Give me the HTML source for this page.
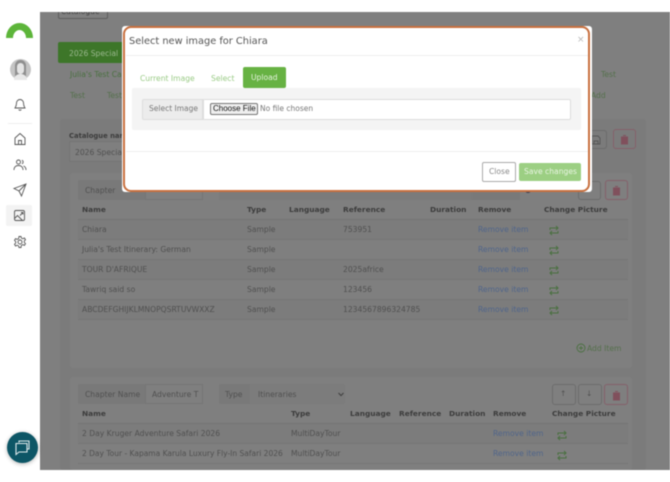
<!DOCTYPE html>
<html><head><meta charset="utf-8">
<style>
html,body{margin:0;padding:0;background:#fff;}
#p{position:relative;width:670px;height:482px;overflow:hidden;background:#fff;font-family:"DejaVu Sans","Liberation Sans",sans-serif;filter:blur(.45px);}
#p div,#p svg{position:absolute;}
.t{position:absolute;white-space:nowrap;font-size:7.6px;line-height:10px;color:#505050;margin-top:1px;}
.h{font-weight:bold;color:#3c3c3c;font-size:7.4px;}
.b{color:#50658a;}
.g{color:#4a7040;}
.l{height:1px;background:#737373;}
.btn{border:1px solid #6c6c6c;border-radius:3px;box-sizing:border-box;}
.red{border-color:#85606a;}
</style></head><body>
<div id="p">
<!-- sidebar -->
<svg style="left:0;top:20px" width="40" height="20" viewBox="0 0 40 20"><path d="M6 18 A13.500 15 0 0 1 33 18 L26 18 A6.500 8 0 0 0 13 18 Z" fill="#5db53a"/></svg>
<div style="left:10px;top:59px;width:21px;height:21px;border-radius:50%;background:#c4c4c4"></div>
<div style="left:15px;top:60px;width:11px;height:18px;border-radius:6px 6px 3px 3px;background:#8f8f8f"></div>
<div style="left:17px;top:63px;width:7px;height:11px;border-radius:4px;background:#e4e4e4"></div>
<div style="left:14px;top:74px;width:13px;height:6px;border-radius:6px 6px 0 0;background:#e8e8e8"></div>
<svg style="left:13px;top:98px" width="14" height="14" viewBox="0 0 14 14" fill="none" stroke="#555" stroke-width=".9"><path d="M7 1.500a3.500 3.500 0 0 1 3.500 3.500c0 3 1 4 1.500 5H2c.5-1 1.500-2 1.500-5A3.500 3.500 0 0 1 7 1.500zM5.700 11.500a1.500 1.500 0 0 0 2.600 0"/></svg>
<div class="l" style="left:8px;top:123px;width:24px;background:#eee"></div>
<svg style="left:13px;top:132px" width="14" height="14" viewBox="0 0 14 14" fill="none" stroke="#555" stroke-width=".9"><path d="M2 6l5-4.500L12 6v6.500H2zM5.500 12.500V8.500h3v4"/></svg>
<svg style="left:13px;top:158px" width="14" height="14" viewBox="0 0 14 14" fill="none" stroke="#555" stroke-width=".9"><circle cx="5.500" cy="4" r="2"/><path d="M1 12c0-3 2-4.500 4.500-4.500S10 9 10 12M9 2.200a2 2 0 0 1 0 3.600M10.500 8c1.500.5 2.500 2 2.500 4"/></svg>
<svg style="left:13px;top:183px" width="14" height="14" viewBox="0 0 14 14" fill="none" stroke="#555" stroke-width=".9"><path d="M13 1L1 5.500l5 2.500 2.500 5zM6 8l7-7"/></svg>
<div style="left:6px;top:205px;width:26px;height:21px;background:#f3f3f3;border-radius:2px"></div>
<svg style="left:13px;top:209px" width="13" height="13" viewBox="0 0 13 13" fill="none" stroke="#555" stroke-width=".9"><rect x="1.500" y="1.500" width="10" height="10" rx="1.500"/><path d="M1.500 9.500l3-3 5 5M8 3.500h2v2M10 3.500L7 6.500"/></svg>
<svg style="left:13px;top:235px" width="14" height="14" viewBox="0 0 14 14" fill="none" stroke="#555" stroke-width=".9"><circle cx="7" cy="7" r="2"/><path d="M6 1.500h2l.4 1.600 1.500.7 1.500-.8 1.100 1.700-1.200 1.200v1.600l1.200 1.200-1.100 1.700-1.500-.8-1.500.7L8 12.500H6l-.4-1.600-1.500-.7-1.500.8-1.100-1.700 1.200-1.200V6.500L1.500 5.300l1.100-1.700 1.500.8 1.500-.7z"/></svg>

<!-- dim backdrop -->
<div style="left:40px;top:12px;width:630px;height:458px;background:#7f7f7f"></div>
<div style="left:58px;top:12px;width:50px;height:7px;border:1px solid #5f5f5f;border-top:0;border-radius:0 0 2px 2px;box-sizing:border-box"></div>
<div style="left:40px;top:0;width:630px;height:22px;overflow:hidden"><span class="t" style="left:21px;top:6px;color:#3f3f3f;clip-path:inset(5px 0 0 0)">Catalogue</span></div>
<div style="left:58px;top:42px;width:72px;height:21px;background:#3d7629;border-radius:2px"></div>
<span class="t" style="left:69px;top:48px;color:#9bb88f">2026 Special</span>
<span class="t g" style="left:70px;top:69px">Julia's Test Ca</span>
<span class="t g" style="left:70px;top:90px;color:#55704c">Test</span>
<span class="t g" style="left:107px;top:90px;color:#55704c">Test</span>
<span class="t g" style="left:601px;top:69px;color:#55704c">Test</span>
<span class="t g" style="left:591px;top:90px;color:#55704c">Add</span>

<!-- outer panel -->
<div style="left:60px;top:119px;width:586px;height:351px;background:#7b7b7b;border-radius:3px"></div>
<span class="t h" style="left:69px;top:130px;font-size:6.800px">Catalogue name</span>
<div style="left:69px;top:141px;width:60px;height:21px;background:#7f7f7f;border:1px solid #747474;box-sizing:border-box;border-radius:2px"></div>
<span class="t" style="left:75px;top:147px">2026 Special</span>
<div class="btn" style="left:584px;top:130px;width:23px;height:19px"></div>
<svg style="left:591px;top:135px" width="10" height="10" viewBox="0 0 10 10" fill="none" stroke="#555" stroke-width=".9"><path d="M1 1h6l2 2v6H1zM3 9V6h4v3"/></svg>
<div class="btn red" style="left:613px;top:129px;width:23px;height:20px"></div>
<svg style="left:620px;top:134px" width="9" height="11" viewBox="0 0 9 11" fill="#80505c"><path d="M1 2.500h7V10.500H1zM3 1h3v1H3z"/></svg>

<!-- chapter 1 -->
<div style="left:70px;top:173px;width:562px;height:195px;background:#7f7f7f;border-radius:3px"></div>
<div style="left:78px;top:180px;width:67px;height:20px;background:#797979;border-radius:2px 0 0 2px"></div>
<span class="t" style="left:85px;top:185px">Chapter</span>
<div style="left:145px;top:180px;width:58px;height:20px;border:1px solid #757575;box-sizing:border-box"></div>
<div style="left:219px;top:185px;width:253px;height:15px;background:#7b7b7b"></div>
<div style="left:472px;top:185px;width:48px;height:15px;background:#797979"></div>
<div style="left:525px;top:187px;width:6px;height:6px;border-radius:50%;background:#2c3552"></div>
<div class="btn" style="left:578px;top:181px;width:23px;height:19px"></div>
<div class="btn red" style="left:605px;top:180px;width:23px;height:20px"></div>
<svg style="left:612px;top:185px" width="9" height="11" viewBox="0 0 9 11" fill="#80505c"><path d="M1 2.500h7V10.500H1zM3 1h3v1H3z"/></svg>

<span class="t h" style="left:82px;top:204px">Name</span>
<span class="t h" style="left:247px;top:204px">Type</span>
<span class="t h" style="left:289px;top:204px">Language</span>
<span class="t h" style="left:343px;top:204px">Reference</span>
<span class="t h" style="left:430px;top:204px">Duration</span>
<span class="t h" style="left:478px;top:204px">Remove</span>
<span class="t h" style="left:544px;top:204px">Change Picture</span>
<div class="l" style="left:78px;top:219px;width:550px"></div>
<div style="left:78px;top:220px;width:550px;height:19px;background:#7c7c7c"></div>
<div class="l" style="left:78px;top:239px;width:550px;background:#767676"></div>
<div style="left:78px;top:260px;width:550px;height:19px;background:#7c7c7c"></div>
<div class="l" style="left:78px;top:259px;width:550px;background:#767676"></div>
<div class="l" style="left:78px;top:279px;width:550px;background:#767676"></div>
<div style="left:78px;top:300px;width:550px;height:19px;background:#7c7c7c"></div>
<div class="l" style="left:78px;top:299px;width:550px;background:#767676"></div>
<div class="l" style="left:78px;top:319px;width:550px;background:#767676"></div>

<span class="t" style="left:82px;top:224px">Chiara</span>
<span class="t" style="left:82px;top:244px">Julia's Test Itinerary: German</span>
<span class="t" style="left:82px;top:264px">TOUR D'AFRIQUE</span>
<span class="t" style="left:82px;top:284px">Tawriq said so</span>
<span class="t" style="left:82px;top:304px">ABCDEFGHIJKLMNOPQSRTUVWXXZ</span>
<span class="t" style="left:247px;top:224px">Sample</span>
<span class="t" style="left:247px;top:244px">Sample</span>
<span class="t" style="left:247px;top:264px">Sample</span>
<span class="t" style="left:247px;top:284px">Sample</span>
<span class="t" style="left:247px;top:304px">Sample</span>
<span class="t" style="left:343px;top:224px">753951</span>
<span class="t" style="left:343px;top:264px">2025africe</span>
<span class="t" style="left:343px;top:284px">123456</span>
<span class="t" style="left:343px;top:304px">1234567896324785</span>
<span class="t b" style="left:478px;top:224px">Remove item</span>
<span class="t b" style="left:478px;top:244px">Remove item</span>
<span class="t b" style="left:478px;top:264px">Remove item</span>
<span class="t b" style="left:478px;top:284px">Remove item</span>
<span class="t b" style="left:478px;top:304px">Remove item</span>
<svg style="left:549px;top:225px" width="10" height="11" viewBox="0 0 10 11" fill="none" stroke="#4a7040"><path d="M1 5V3h8M7 1l2 2-2 2M9 6v2H1M3 6L1 8l2 2"/></svg>
<svg style="left:549px;top:245px" width="10" height="11" viewBox="0 0 10 11" fill="none" stroke="#4a7040"><path d="M1 5V3h8M7 1l2 2-2 2M9 6v2H1M3 6L1 8l2 2"/></svg>
<svg style="left:549px;top:265px" width="10" height="11" viewBox="0 0 10 11" fill="none" stroke="#4a7040"><path d="M1 5V3h8M7 1l2 2-2 2M9 6v2H1M3 6L1 8l2 2"/></svg>
<svg style="left:549px;top:285px" width="10" height="11" viewBox="0 0 10 11" fill="none" stroke="#4a7040"><path d="M1 5V3h8M7 1l2 2-2 2M9 6v2H1M3 6L1 8l2 2"/></svg>
<svg style="left:549px;top:305px" width="10" height="11" viewBox="0 0 10 11" fill="none" stroke="#4a7040"><path d="M1 5V3h8M7 1l2 2-2 2M9 6v2H1M3 6L1 8l2 2"/></svg>
<svg style="left:576px;top:343px" width="10" height="10" viewBox="0 0 10 10" fill="none" stroke="#4a7040" stroke-width=".9"><circle cx="5" cy="5" r="4"/><path d="M5 3v4M3 5h4"/></svg>
<span class="t" style="left:587px;top:343px;color:#55704c">Add Item</span>

<!-- chapter 2 -->
<div style="left:70px;top:377px;width:562px;height:93px;background:#7f7f7f;border-radius:3px"></div>
<div style="left:78px;top:384px;width:67px;height:20px;background:#797979;border-radius:2px 0 0 2px"></div>
<span class="t" style="left:85px;top:389px">Chapter Name</span>
<div style="left:145px;top:384px;width:58px;height:20px;border:1px solid #757575;box-sizing:border-box"></div>
<span class="t" style="left:152px;top:389px">Adventure T</span>
<div style="left:219px;top:384px;width:31px;height:20px;background:#797979;border-radius:2px 0 0 2px"></div>
<span class="t" style="left:225px;top:389px">Type</span>
<div style="left:250px;top:384px;width:95px;height:20px;background:#7c7c7c;border-radius:0 2px 2px 0"></div>
<span class="t" style="left:258px;top:389px">Itineraries</span>
<svg style="left:338px;top:392px" width="6" height="5" viewBox="0 0 6 5" fill="none" stroke="#444" stroke-width="1.200"><path d="M.5 1L3 3.500 5.500 1"/></svg>
<div class="btn" style="left:552px;top:384px;width:24px;height:21px"></div>
<span class="t" style="left:560px;top:388px">↑</span>
<div class="btn" style="left:578px;top:384px;width:24px;height:21px"></div>
<span class="t" style="left:586px;top:388px">↓</span>
<div class="btn red" style="left:604px;top:384px;width:24px;height:21px"></div>
<svg style="left:612px;top:390px" width="9" height="11" viewBox="0 0 9 11" fill="#80505c"><path d="M1 2.500h7V10.500H1zM3 1h3v1H3z"/></svg>
<span class="t h" style="left:82px;top:408px">Name</span>
<span class="t h" style="left:291px;top:408px">Type</span>
<span class="t h" style="left:350px;top:408px">Language</span>
<span class="t h" style="left:399px;top:408px">Reference</span>
<span class="t h" style="left:449px;top:408px">Duration</span>
<span class="t h" style="left:493px;top:408px">Remove</span>
<span class="t h" style="left:552px;top:408px">Change Picture</span>
<div class="l" style="left:78px;top:423px;width:550px"></div>
<div style="left:78px;top:424px;width:550px;height:19px;background:#7c7c7c"></div>
<div class="l" style="left:78px;top:443px;width:550px;background:#767676"></div>
<div class="l" style="left:78px;top:463px;width:550px;background:#767676"></div>
<span class="t" style="left:82px;top:428px">2 Day Kruger Adventure Safari 2026</span>
<span class="t" style="left:82px;top:448px;font-size:7.500px">2 Day Tour - Kapama Karula Luxury Fly-In Safari 2026</span>
<span class="t" style="left:291px;top:428px">MultiDayTour</span>
<span class="t" style="left:291px;top:448px">MultiDayTour</span>
<span class="t b" style="left:493px;top:428px">Remove item</span>
<span class="t b" style="left:493px;top:448px">Remove item</span>
<svg style="left:557px;top:430px" width="10" height="11" viewBox="0 0 10 11" fill="none" stroke="#4a7040"><path d="M1 5V3h8M7 1l2 2-2 2M9 6v2H1M3 6L1 8l2 2"/></svg>
<svg style="left:557px;top:450px" width="10" height="11" viewBox="0 0 10 11" fill="none" stroke="#4a7040"><path d="M1 5V3h8M7 1l2 2-2 2M9 6v2H1M3 6L1 8l2 2"/></svg>

<!-- modal -->
<div style="left:122px;top:26px;width:470px;height:166px;background:#fff;border-radius:3px"></div>
<div style="left:123px;top:26px;width:467px;height:166px;box-sizing:border-box;border:2.500px solid #c8703f;border-radius:8px"></div>
<span class="t" style="left:129px;top:34px;font-size:9.800px;line-height:13px;color:#555">Select new image for Chiara</span>
<span class="t" style="left:577px;top:34px;color:#b8b8b8;font-size:9px">×</span>
<div class="l" style="left:126px;top:55px;width:462px;background:#eeeeee"></div>
<span class="t" style="left:140px;top:73px;color:#9acb86">Current Image</span>
<span class="t" style="left:211px;top:73px;color:#9acb86">Select</span>
<div style="left:243px;top:67px;width:43px;height:21px;background:#67b243;border-radius:2px"></div>
<span class="t" style="left:251px;top:72px;color:#e6f3df">Upload</span>
<div style="left:132px;top:88px;width:449px;height:42px;background:#f4f4f4;border-radius:2px"></div>
<div style="left:142px;top:99px;width:61px;height:21px;background:#ececec;border:1px solid #dddddd;box-sizing:border-box;border-radius:2px 0 0 2px"></div>
<span class="t" style="left:149px;top:103px;color:#777;font-size:7.500px">Select Image</span>
<div style="left:203px;top:99px;width:368px;height:21px;background:#fff;border:1px solid #dddddd;box-sizing:border-box;border-radius:0 2px 2px 0"></div>
<div style="left:210px;top:103px;width:48px;height:12px;background:#efefef;border:1px solid #767676;box-sizing:border-box;border-radius:2px"></div>
<span class="t" style="left:213px;top:103px;font-family:'Liberation Sans',sans-serif;font-size:8px;color:#111">Choose File</span>
<span class="t" style="left:260px;top:103px;color:#777;font-size:7.500px">No file chosen</span>
<div class="l" style="left:126px;top:151px;width:462px;background:#eeeeee"></div>
<div style="left:482px;top:162px;width:34px;height:20px;background:#fff;border:1px solid #aaa;box-sizing:border-box;border-radius:2px"></div>
<span class="t" style="left:489px;top:166px;color:#888">Close</span>
<div style="left:519px;top:163px;width:62px;height:18px;background:#9ccf83;border-radius:2px"></div>
<span class="t" style="left:524px;top:166px;color:#e9f5e3">Save changes</span>

<!-- chat -->
<div style="left:7px;top:432px;width:31px;height:31px;border-radius:50%;background:#0d5666;box-shadow:0 1px 4px rgba(0,0,0,.3)"></div>
<svg style="left:14px;top:439px" width="17" height="17" viewBox="0 0 17 17" fill="none" stroke="#dfe9eb" stroke-width="1.100"><path d="M5 3.500V2h10v8h-1.500M2 4.500h11v8.500H5l-3 2.500z"/></svg>
</div>
</body></html>
